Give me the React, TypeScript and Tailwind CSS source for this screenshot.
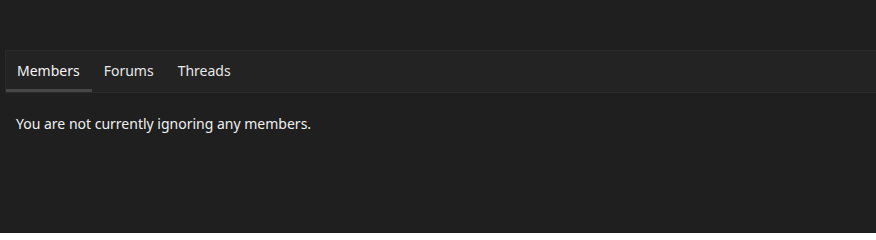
const tabs = ['Members', 'Forums', 'Threads'];

export default function App() {
  return (
    <div
      className="w-[876px] h-[233px] bg-[#1f1f1f] pt-[50px] pl-[5px] text-[14px] leading-[20px] overflow-hidden"
      style={{ fontFamily: '"Noto Sans", "Open Sans", sans-serif' }}
    >
      <div className="flex h-[43px] w-[900px] border border-[#2a2a2a] bg-[#232323]">
        {tabs.map((tab, i) => (
          <button
            key={tab}
            className={
              i === 0
                ? 'flex items-center pl-[11px] pr-[12px] pt-[2px] border-b-[3px] border-[#474747] text-[#f4f4f4]'
                : 'flex items-center px-[12px] pt-[2px] border-b-[3px] border-transparent text-[#e8e8e8]'
            }
          >
            {tab}
          </button>
        ))}
      </div>
      <p className="pl-[11px] pt-[21px] text-[#f0f0f0]">You are not currently ignoring any members.</p>
    </div>
  );
}
